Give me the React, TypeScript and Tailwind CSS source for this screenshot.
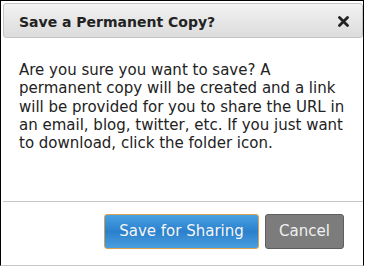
import React from "react";

export default function App() {
  return (
    <div className="w-[365px] h-[267px] bg-white" style={{ fontFamily: '"DejaVu Sans", Verdana, sans-serif' }}>
      <div className="w-[364px] h-[266px] border-l border-t border-r border-black border-b border-b-[#c8c8c8] pt-[2px] pl-[2px] flex flex-col">
        <div className="h-[35px] rounded-[3px] border border-[#c4c4c4] bg-gradient-to-b from-[#f2f2f2] to-[#dcdcdc] flex items-center justify-between pl-[15px] pr-[12px]">
          <span className="text-[14px] font-bold text-[#222] leading-none mt-[2px]">Save a Permanent Copy?</span>
          <svg width="11" height="11" viewBox="0 0 11 11" className="mr-[1px] mt-[1px]">
            <path d="M1.5 1.5 L9.5 9.5 M9.5 1.5 L1.5 9.5" stroke="#222" strokeWidth="2.8" strokeLinecap="round" />
          </svg>
        </div>
        <div className="h-[163px] pt-[23px] pl-[16px] pr-[6px]">
          <p className="text-[15px] leading-[18.3px] text-[#222]">
            Are you sure you want to save? A permanent copy will be created and a link will be provided for you to share the URL in an email, blog, twitter, etc. If you just want to download, click the folder icon.
          </p>
        </div>
        <div className="h-px bg-[#c6c6c6]" />
        <div className="flex justify-end gap-[6px] pt-[12px] pr-[19px]">
          <button className="w-[155px] h-[35px] rounded-[3px] border border-[#d9a04f] bg-gradient-to-b from-[#4aa2e3] via-[#2a80cc] to-[#4a9fdf] text-[#f6f6f6] text-[15px] leading-none">
            Save for Sharing
          </button>
          <button className="w-[79px] h-[35px] rounded-[3px] border border-[#5e5e5e] bg-[#7c7c7c] text-[#f0f0f0] text-[15px] leading-none">
            Cancel
          </button>
        </div>
      </div>
    </div>
  );
}
